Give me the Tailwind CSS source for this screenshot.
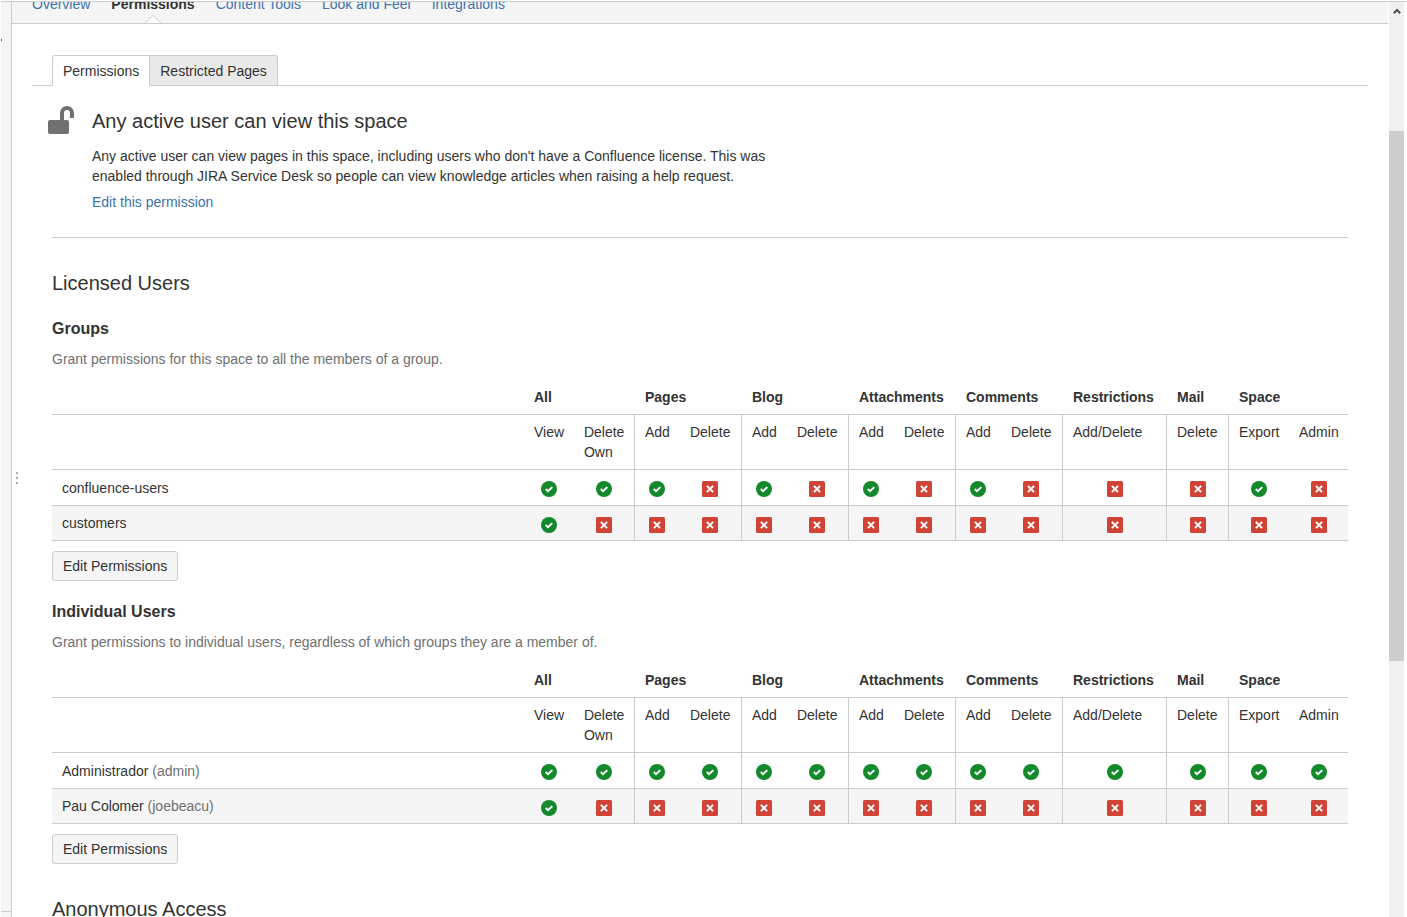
<!DOCTYPE html>
<html lang="en">
<head>
    <meta charset="UTF-8">
    <meta name="viewport" content="width=device-width, initial-scale=1.0">
    <title>Space Permissions - Confluence</title>
    <script src="https://cdn.jsdelivr.net/npm/@tailwindcss/browser@4"></script>
</head>
<body class="h-screen overflow-hidden bg-white font-['Liberation_Sans',Arial,sans-serif] text-[14px] leading-5 text-[#333] pt-px pl-px">
    <!-- Icon sprite -->
    <svg class="hidden">
        <symbol id="icon-yes" viewBox="0 0 16 16">
            <circle cx="8" cy="8" r="8" fill="#14892c"/>
            <path d="M4.8 8l2.2 2.2 4.3-4.1" fill="none" stroke="#fff" stroke-width="2"/>
        </symbol>
        <symbol id="icon-no" viewBox="0 0 16 16">
            <rect width="16" height="16" rx="1.5" fill="#d04437"/>
            <path d="M4.9 4.9l6.2 6.2M11.1 4.9l-6.2 6.2" fill="none" stroke="#fff" stroke-width="2"/>
        </symbol>
    </svg>

    <div class="flex h-full border-t border-[#ccc]">
        <!-- Collapsed sidebar -->
        <aside class="relative w-[11px] shrink-0 border-r border-[#ccc] bg-[#f5f5f5]">
            <span class="absolute top-[37px] left-0 h-[2px] w-px bg-[#3b73af]"></span>
            <div class="absolute bottom-0 left-0 h-[6px] w-full border-t border-[#ccc]"></div>
            <div class="absolute top-[470px] left-[15px] flex flex-col gap-[3px]">
                <span class="size-[2px] bg-[#aaa]"></span>
                <span class="size-[2px] bg-[#aaa]"></span>
                <span class="size-[2px] bg-[#aaa]"></span>
            </div>
        </aside>

        <main class="min-w-0 flex-1 overflow-hidden">
            <!-- Space tools navigation -->
            <nav class="flex h-[22px] items-end gap-[21px] overflow-hidden border-b border-[#ccc] bg-[#f5f5f5] pb-[9px] pl-5">
                <a href="#" class="text-[#3b73af]">Overview</a>
                <a href="#" class="relative font-bold text-[#333]">Permissions
                    <svg class="absolute top-[21px] left-1/2 h-2 w-4 -translate-x-1/2" viewBox="0 0 16 8">
                        <path d="M0 8l8-7.5L16 8" fill="#fff" stroke="#ccc"/>
                    </svg>
                </a>
                <a href="#" class="text-[#3b73af]">Content Tools</a>
                <a href="#" class="text-[#3b73af]">Look and Feel</a>
                <a href="#" class="text-[#3b73af]">Integrations</a>
            </nav>

            <div class="px-5 pt-[31px]">
                <!-- Tabs -->
                <div class="flex border-b border-[#ccc] pl-5">
                    <a href="#" class="-mb-px rounded-tl-[3px] border border-b-0 border-[#ccc] bg-white px-[10px] py-[5px]">Permissions</a>
                    <a href="#" class="rounded-tr-[3px] border border-b-0 border-l-0 border-[#ccc] bg-[#e9e9e9] px-[10px] pt-[5px] pb-1">Restricted Pages</a>
                </div>

                <div class="px-5">
                    <section class="flex border-b border-[#ccc] pt-5 pb-[25px]">
                        <svg class="-ml-1 h-7 w-[26px] shrink-0" viewBox="0 0 26 28" fill="#707070">
                            <rect y="14" width="21" height="14" rx="2"/>
                            <path d="M12 15V7a7 7 0 0 1 14 0v5h-4V7a3 3 0 0 0-6 0v8z"/>
                        </svg>
                        <div class="ml-[18px] max-w-[700px]">
                            <h2 class="text-[20px] leading-[30px]">Any active user can view this space</h2>
                            <p class="mt-[10px]">Any active user can view pages in this space, including users who don't have a Confluence license. This was enabled through JIRA Service Desk so people can view knowledge articles when raising a help request.</p>
                            <a href="#" class="mt-[6px] block text-[#3b73af]">Edit this permission</a>
                        </div>
                    </section>

                    <h2 class="mt-[30px] text-[20px] leading-[30px]">Licensed Users</h2>

                    <h3 class="mt-[21px] text-[16px] leading-5 font-bold">Groups</h3>
                    <p class="mt-[10px] text-[#707070]">Grant permissions for this space to all the members of a group.</p>
                    <div id="groups"></div>
                    <button type="button" class="mt-[10px] h-[30px] rounded-[3px] border border-[#ccc] bg-[#f5f5f5] px-[10px]">Edit Permissions</button>

                    <h3 class="mt-[21px] text-[16px] leading-5 font-bold">Individual Users</h3>
                    <p class="mt-[10px] text-[#707070]">Grant permissions to individual users, regardless of which groups they are a member of.</p>
                    <div id="users"></div>
                    <button type="button" class="mt-[10px] h-[30px] rounded-[3px] border border-[#ccc] bg-[#f5f5f5] px-[10px]">Edit Permissions</button>

                    <h2 class="mt-[30px] text-[20px] leading-[30px]">Anonymous Access</h2>
                </div>
            </div>
        </main>

        <!-- Scrollbar -->
        <div class="mr-[3px] ml-px w-[15px] shrink-0 bg-[#f0f0f0]">
            <svg class="mx-auto mt-[6px] h-[6px] w-2" viewBox="0 0 8 6">
                <path d="M.8 5.2L4 2l3.2 3.2" fill="none" stroke="#505050" stroke-width="2"/>
            </svg>
            <div class="mt-[117px] h-[530px] bg-[#cdcdcd]"></div>
        </div>
    </div>

    <!-- Table head and columns shared by both permission tables -->
    <template id="permissionTable">
        <table class="mt-[18px] w-full table-fixed border-separate border-spacing-0 text-left">
            <colgroup>
                <col>
                <col class="w-[50px]"><col class="w-[60px]">
                <col class="w-[46px]"><col class="w-[61px]">
                <col class="w-[46px]"><col class="w-[61px]">
                <col class="w-[46px]"><col class="w-[61px]">
                <col class="w-[46px]"><col class="w-[61px]">
                <col class="w-[104px]">
                <col class="w-[62px]">
                <col class="w-[61px]"><col class="w-[59px]">
            </colgroup>
            <thead>
                <tr class="*:border-b *:border-[#ccc] *:px-[10px] *:pb-[7px] *:whitespace-nowrap">
                    <td></td>
                    <th colspan="2">All</th>
                    <th colspan="2"><span class="ml-px">Pages</span></th>
                    <th colspan="2"><span class="ml-px">Blog</span></th>
                    <th colspan="2"><span class="ml-px">Attachments</span></th>
                    <th colspan="2"><span class="ml-px">Comments</span></th>
                    <th><span class="ml-px">Restrictions</span></th>
                    <th><span class="ml-px">Mail</span></th>
                    <th colspan="2"><span class="ml-px">Space</span></th>
                </tr>
                <tr class="*:border-b *:border-[#ccc] *:px-[10px] *:py-[7px] *:align-top *:font-normal">
                    <td></td>
                    <th>View</th>
                    <th>Delete Own</th>
                    <th class="border-l">Add</th>
                    <th>Delete</th>
                    <th class="border-l">Add</th>
                    <th>Delete</th>
                    <th class="border-l">Add</th>
                    <th>Delete</th>
                    <th class="border-l">Add</th>
                    <th>Delete</th>
                    <th class="border-l">Add/Delete</th>
                    <th class="border-l">Delete</th>
                    <th class="border-l">Export</th>
                    <th>Admin</th>
                </tr>
            </thead>
            <tbody></tbody>
        </table>
    </template>

    <script>
        // One digit per column, 1 = granted
        const groups = [
            { name: 'confluence-users', access: '11101010100010' },
            { name: 'customers', access: '10000000000000' }
        ];
        const users = [
            { name: 'Administrador', login: 'admin', access: '11111111111111' },
            { name: 'Pau Colomer', login: 'joebeacu', access: '10000000000000' }
        ];
        // Columns that open a new permission category
        const categoryStarts = [2, 4, 6, 8, 10, 11, 12];

        function renderTable(id, rows) {
            const table = document.getElementById('permissionTable').content.cloneNode(true);
            table.querySelector('tbody').innerHTML = rows.map(row => {
                const login = row.login ? ` <span class="text-[#707070]">(${row.login})</span>` : '';
                const cells = [...row.access].map((value, i) => {
                    const border = categoryStarts.includes(i) ? 'border-l' : '';
                    const icon = value === '1' ? 'yes' : 'no';
                    const label = value === '1' ? 'Granted' : 'Denied';
                    return `<td class="border-b border-[#ccc] pt-[3px] ${border}"><svg class="mx-auto size-4" role="img" aria-label="${label}"><use href="#icon-${icon}"/></svg></td>`;
                }).join('');
                return `<tr class="h-[35px] odd:h-9 even:bg-[#f5f5f5]"><td class="border-b border-[#ccc] px-[10px]">${row.name}${login}</td>${cells}</tr>`;
            }).join('');
            document.getElementById(id).appendChild(table);
        }

        renderTable('groups', groups);
        renderTable('users', users);
    </script>
</body>
</html>
